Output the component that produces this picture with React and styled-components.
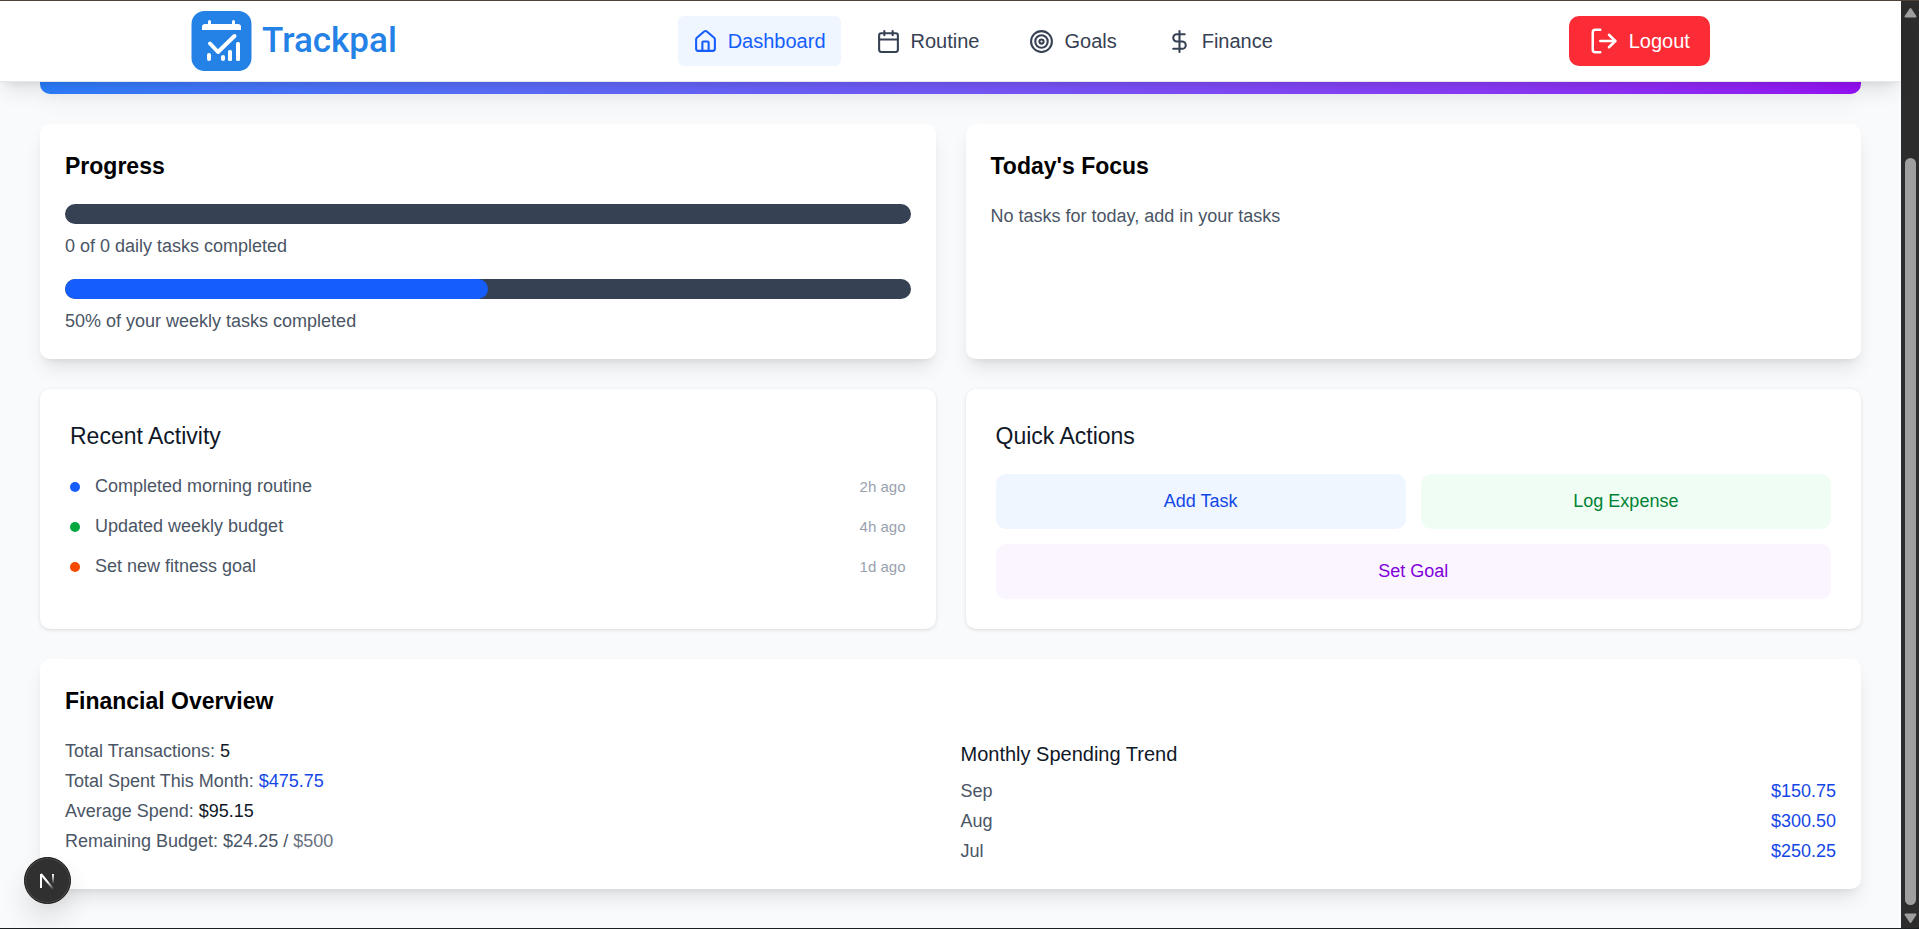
import React from "react";
import styled, { createGlobalStyle } from "styled-components";
import { House, Calendar, Target, DollarSign, LogOut } from "lucide-react";

const GlobalStyle = createGlobalStyle`
  *, *::before, *::after { box-sizing: border-box; }
  body {
    margin: 0;
    background: #f9fafc;
    color: #000;
    font-family: "Liberation Sans", Arial, Helvetica, sans-serif;
    font-size: 18px;
    line-height: 25px;
  }
  h2, h3, p, ul, dl, dd { margin: 0; padding: 0; }
  ul { list-style: none; }
  button { font: inherit; border: 0; cursor: pointer; }
`;

const shadowLarge = "0 12px 19px -4px rgba(0,0,0,.1), 0 5px 8px -5px rgba(0,0,0,.1)";
const shadowSmall = "0 1px 4px rgba(0,0,0,.1), 0 1px 2px -1px rgba(0,0,0,.1)";

const Frame = styled.div`
  display: flex;
  min-height: 100vh;
  border-top: 1px solid #4d4239;
  border-bottom: 1px solid #1b1f22;
`;

const Page = styled.div`
  flex: 1;
  min-width: 0;
`;

const Header = styled.header`
  position: sticky;
  top: 0;
  z-index: 10;
  background: #fff;
  border-bottom: 1px solid #e5e7eb;
  box-shadow: ${shadowLarge};
`;

const HeaderInner = styled.div`
  display: flex;
  align-items: center;
  justify-content: space-between;
  width: 80%;
  margin: 0 auto;
  padding: 10px 1px;
`;

const Brand = styled.a`
  display: flex;
  align-items: center;
  gap: 10px;
  color: #2481e6;
  font-family: Roboto, sans-serif;
  font-size: 35px;
  font-weight: 500;
  line-height: 40px;
  text-decoration: none;

  svg { display: block; }
`;

const NavLinks = styled.nav`
  display: flex;
  gap: 20px;
`;

const NavLink = styled.a`
  display: flex;
  align-items: center;
  gap: 10px;
  padding: 10px 15px;
  border-radius: 6px;
  background: ${(p) => (p.$active ? "#eff6ff" : "transparent")};
  color: ${(p) => (p.$active ? "#155dfc" : "#364153")};
  font-size: 20px;
  line-height: 30px;
  text-decoration: none;
`;

const LogoutButton = styled.button`
  display: flex;
  align-items: center;
  gap: 10px;
  padding: 10px 20px;
  border-radius: 10px;
  background: #fb2c36;
  color: #fff;
  font-size: 20px;
  line-height: 30px;
`;

const Main = styled.main`
  display: flex;
  flex-direction: column;
  gap: 30px;
  padding: 0 40px 30px;
`;

const BannerEdge = styled.div`
  height: 12px;
  border-radius: 0 0 10px 10px;
  background: linear-gradient(to right in oklab, #2b7fff, #9810fa);
  box-shadow: ${shadowLarge};
`;

const CardGrid = styled.div`
  display: grid;
  grid-template-columns: 1fr 1fr;
  gap: 30px;
`;

const Card = styled.section`
  padding: ${(p) => (p.$flat ? "30px" : "25px")};
  border-radius: 10px;
  background: #fff;
  box-shadow: ${(p) => (p.$flat ? shadowSmall : shadowLarge)};
`;

const CardTitle = styled.h2`
  margin-bottom: 20px;
  color: ${(p) => (p.$light ? "#101828" : "#000")};
  font-size: 23px;
  font-weight: ${(p) => (p.$light ? 400 : 700)};
  line-height: 35px;
`;

const Text = styled.p`
  color: #4a5565;
`;

const ProgressList = styled.div`
  display: flex;
  flex-direction: column;
  gap: 20px;
`;

const ProgressItem = styled.div`
  display: flex;
  flex-direction: column;
  gap: 10px;
`;

const Track = styled.div`
  height: 20px;
  overflow: hidden;
  border-radius: 10px;
  background: #364153;
`;

const Fill = styled.div`
  height: 100%;
  border-radius: 10px;
  background: #155dfc;
`;

const ActivityList = styled.ul`
  display: flex;
  flex-direction: column;
  gap: 15px;
`;

const ActivityRow = styled.li`
  display: flex;
  align-items: center;
  gap: 15px;
  color: #4a5565;
`;

const Dot = styled.span`
  width: 10px;
  height: 10px;
  border-radius: 50%;
  background: ${(p) => p.$color};
`;

const Time = styled.time`
  margin-left: auto;
  color: #99a1af;
  font-size: 15px;
`;

const Actions = styled.div`
  display: grid;
  grid-template-columns: 1fr 1fr;
  gap: 15px;
`;

const ActionButton = styled.button`
  grid-column: ${(p) => (p.$wide ? "span 2" : "auto")};
  padding: 15px;
  border-radius: 10px;
  background: ${(p) => p.$background};
  color: ${(p) => p.$color};
`;

const FinanceColumns = styled.div`
  display: grid;
  grid-template-columns: 1fr 1fr;
  gap: 20px;
`;

const Stack = styled.div`
  display: flex;
  flex-direction: column;
  gap: 5px;
`;

const Value = styled.span`
  color: ${(p) => p.$color};
`;

const TrendTitle = styled.h3`
  margin-bottom: 10px;
  color: #101828;
  font-size: 20px;
  font-weight: 400;
  line-height: 30px;
`;

const TrendList = styled.dl`
  display: flex;
  flex-direction: column;
  gap: 5px;
  margin: 0;
`;

const TrendRow = styled.div`
  display: flex;
  justify-content: space-between;
  color: #4a5565;

  dd { color: #1447e6; }
`;

const DevBadge = styled.button`
  position: fixed;
  left: 24px;
  bottom: 25px;
  z-index: 20;
  display: grid;
  place-items: center;
  width: 47px;
  height: 47px;
  padding: 0;
  border: 1px solid #161616;
  border-radius: 50%;
  background: #303030;
  box-shadow: inset 0 0 0 1px #4a4a4a, 0 16px 32px -8px rgba(0,0,0,.24);
`;

const Scrollbar = styled.div`
  display: flex;
  flex-direction: column;
  align-items: center;
  justify-content: space-between;
  width: 18px;
  padding: 6px 0 4px 1px;
  background: #2c2c2c;
`;

const ScrollTrack = styled.div`
  display: flex;
  flex: 1;
  flex-direction: column;
  justify-content: flex-end;
  padding: 8px 0;
`;

const Thumb = styled.div`
  width: 11px;
  height: 85%;
  border-radius: 6px;
  background: #9f9f9f;
`;

const LogoMark = () => (
  <svg width="61" height="60" viewBox="0 0 61 60" aria-hidden="true">
    <rect x="0.500" width="60" height="60" rx="13" fill="#2481e6" />
    <g fill="#fff">
      <path d="M14 13h33a3 3 0 0 1 3 3v3H11v-3a3 3 0 0 1 3-3z" />
      <rect x="17" y="9" width="3" height="7" rx="1.500" />
      <rect x="41" y="9" width="3" height="7" rx="1.500" />
      <rect x="16" y="42" width="4" height="8" rx="2" />
      <rect x="30" y="44" width="4" height="6" rx="2" />
      <rect x="37" y="39" width="4" height="11" rx="1.500" />
      <rect x="45" y="31" width="4" height="19" rx="1.500" />
    </g>
    <path d="M19 32.500 27 41 43.500 25" fill="none" stroke="#fff" strokeWidth="4" strokeLinecap="round" strokeLinejoin="round" />
  </svg>
);

const BadgeMark = () => (
  <svg width="17" height="18" viewBox="0 0 17 18" fill="none" aria-hidden="true">
    <defs>
      <linearGradient id="diagonal" x1="9" y1="9" x2="15" y2="17" gradientUnits="userSpaceOnUse">
        <stop stopColor="#fff" />
        <stop offset="1" stopColor="#fff" stopOpacity="0" />
      </linearGradient>
      <linearGradient id="stem" x1="14" y1="2" x2="14" y2="12" gradientUnits="userSpaceOnUse">
        <stop stopColor="#fff" />
        <stop offset="1" stopColor="#fff" stopOpacity="0" />
      </linearGradient>
    </defs>
    <path d="M2 16V2" stroke="#fff" strokeWidth="2" />
    <path d="M2 2l13 16" stroke="url(#diagonal)" strokeWidth="2" />
    <path d="M14 2v10" stroke="url(#stem)" strokeWidth="2" />
  </svg>
);

const Arrow = ({ down }) => (
  <svg width="13" height="11" viewBox="0 0 13 11" aria-hidden="true">
    <path
      d={down ? "M1.500 1.500h10L6.500 9z" : "M1.500 9.500h10L6.500 2z"}
      fill="#9f9f9f"
      stroke="#9f9f9f"
      strokeWidth="2"
      strokeLinejoin="round"
    />
  </svg>
);

const links = [
  { label: "Dashboard", icon: House, active: true },
  { label: "Routine", icon: Calendar },
  { label: "Goals", icon: Target },
  { label: "Finance", icon: DollarSign },
];

const progress = [
  { percent: 0, label: "0 of 0 daily tasks completed" },
  { percent: 50, label: "50% of your weekly tasks completed" },
];

const activity = [
  { color: "#155dfc", label: "Completed morning routine", time: "2h ago" },
  { color: "#00a63e", label: "Updated weekly budget", time: "4h ago" },
  { color: "#f54900", label: "Set new fitness goal", time: "1d ago" },
];

const trend = [
  ["Sep", "$150.75"],
  ["Aug", "$300.50"],
  ["Jul", "$250.25"],
];

export default function App() {
  return (
    <>
      <GlobalStyle />
      <Frame>
        <Page>
          <Header>
            <HeaderInner>
              <Brand href="#">
                <LogoMark />
                Trackpal
              </Brand>
              <NavLinks>
                {links.map(({ label, icon: Icon, active }) => (
                  <NavLink key={label} href="#" $active={active}>
                    <Icon size={25} />
                    {label}
                  </NavLink>
                ))}
              </NavLinks>
              <LogoutButton type="button">
                <LogOut size={30} />
                Logout
              </LogoutButton>
            </HeaderInner>
          </Header>
          <Main>
            <BannerEdge />
            <CardGrid>
              <Card>
                <CardTitle>Progress</CardTitle>
                <ProgressList>
                  {progress.map(({ percent, label }) => (
                    <ProgressItem key={label}>
                      <Track role="progressbar" aria-label={label} aria-valuenow={percent} aria-valuemin={0} aria-valuemax={100}>
                        <Fill style={{ width: `${percent}%` }} />
                      </Track>
                      <Text>{label}</Text>
                    </ProgressItem>
                  ))}
                </ProgressList>
              </Card>
              <Card>
                <CardTitle>Today's Focus</CardTitle>
                <Text>No tasks for today, add in your tasks</Text>
              </Card>
              <Card $flat>
                <CardTitle $light>Recent Activity</CardTitle>
                <ActivityList>
                  {activity.map(({ color, label, time }) => (
                    <ActivityRow key={label}>
                      <Dot $color={color} />
                      <span>{label}</span>
                      <Time>{time}</Time>
                    </ActivityRow>
                  ))}
                </ActivityList>
              </Card>
              <Card $flat>
                <CardTitle $light>Quick Actions</CardTitle>
                <Actions>
                  <ActionButton type="button" $background="#eff6ff" $color="#1447e6">Add Task</ActionButton>
                  <ActionButton type="button" $background="#f0fdf4" $color="#008236">Log Expense</ActionButton>
                  <ActionButton type="button" $wide $background="#faf5ff" $color="#8200db">Set Goal</ActionButton>
                </Actions>
              </Card>
            </CardGrid>
            <Card>
              <CardTitle>Financial Overview</CardTitle>
              <FinanceColumns>
                <Stack>
                  <Text>Total Transactions: <Value $color="#101828">5</Value></Text>
                  <Text>Total Spent This Month: <Value $color="#1447e6">$475.75</Value></Text>
                  <Text>Average Spend: <Value $color="#101828">$95.15</Value></Text>
                  <Text>Remaining Budget: $24.25 / <Value $color="#6a7282">$500</Value></Text>
                </Stack>
                <div>
                  <TrendTitle>Monthly Spending Trend</TrendTitle>
                  <TrendList>
                    {trend.map(([month, amount]) => (
                      <TrendRow key={month}>
                        <dt>{month}</dt>
                        <dd>{amount}</dd>
                      </TrendRow>
                    ))}
                  </TrendList>
                </div>
              </FinanceColumns>
            </Card>
          </Main>
        </Page>
        <Scrollbar aria-hidden="true">
          <Arrow />
          <ScrollTrack>
            <Thumb />
          </ScrollTrack>
          <Arrow down />
        </Scrollbar>
      </Frame>
      <DevBadge type="button" aria-label="Open developer tools">
        <BadgeMark />
      </DevBadge>
    </>
  );
}
